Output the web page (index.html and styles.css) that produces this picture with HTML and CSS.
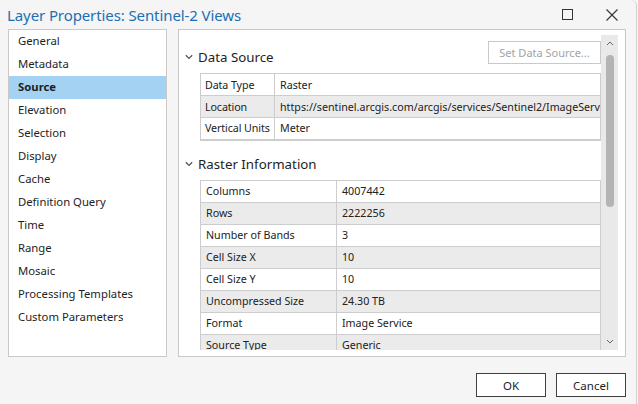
FILE: index.html
```html
<!DOCTYPE html>
<html lang="en">
<head>
<meta charset="utf-8">
<title>Layer Properties</title>
<link rel="stylesheet" href="styles.css">
</head>
<body>
<div class="window">
  <header class="titlebar">
    <h1 class="title">Layer Properties: Sentinel-2 Views</h1>
    <div class="controls">
      <svg class="ctl" width="11" height="11" viewBox="0 0 11 11"><rect x="0.5" y="0.5" width="10" height="10" fill="none" stroke="#333" stroke-width="1"/></svg>
      <svg class="ctl" width="12" height="12" viewBox="0 0 12 12"><path d="M0.5 0.5 L11.5 11.5 M11.5 0.5 L0.5 11.5" stroke="#333" stroke-width="1.1" fill="none"/></svg>
    </div>
  </header>
  <div class="main">
    <nav class="nav">
      <ul class="nav-list">
        <li class="nav-item">General</li>
        <li class="nav-item">Metadata</li>
        <li class="nav-item is-selected">Source</li>
        <li class="nav-item">Elevation</li>
        <li class="nav-item">Selection</li>
        <li class="nav-item">Display</li>
        <li class="nav-item">Cache</li>
        <li class="nav-item">Definition Query</li>
        <li class="nav-item">Time</li>
        <li class="nav-item">Range</li>
        <li class="nav-item">Mosaic</li>
        <li class="nav-item">Processing Templates</li>
        <li class="nav-item">Custom Parameters</li>
      </ul>
    </nav>
    <section class="pane">
      <div class="scroller">
        <div class="section-head">
          <svg class="chev" width="8" height="6" viewBox="0 0 8 6"><path d="M0.8 1.2 L4 4.4 L7.2 1.2" stroke="#555" stroke-width="1.3" fill="none"/></svg>
          <h2 class="section-title">Data Source</h2>
          <button class="set-src" type="button">Set Data Source...</button>
        </div>
        <table class="grid grid-ds">
          <tr><td class="k">Data Type</td><td class="v">Raster</td></tr>
          <tr class="alt"><td class="k">Location</td><td class="v">https://sentinel.arcgis.com/arcgis/services/Sentinel2/ImageServer</td></tr>
          <tr><td class="k">Vertical Units</td><td class="v">Meter</td></tr>
        </table>
        <div class="section-head section-head-2">
          <svg class="chev" width="8" height="6" viewBox="0 0 8 6"><path d="M0.8 1.2 L4 4.4 L7.2 1.2" stroke="#555" stroke-width="1.3" fill="none"/></svg>
          <h2 class="section-title">Raster Information</h2>
        </div>
        <table class="grid grid-ri">
          <tr><td class="k">Columns</td><td class="v">4007442</td></tr>
          <tr class="alt"><td class="k">Rows</td><td class="v">2222256</td></tr>
          <tr><td class="k">Number of Bands</td><td class="v">3</td></tr>
          <tr class="alt"><td class="k">Cell Size X</td><td class="v">10</td></tr>
          <tr><td class="k">Cell Size Y</td><td class="v">10</td></tr>
          <tr class="alt"><td class="k">Uncompressed Size</td><td class="v">24.30 TB</td></tr>
          <tr><td class="k">Format</td><td class="v">Image Service</td></tr>
          <tr class="alt"><td class="k">Source Type</td><td class="v">Generic</td></tr>
          <tr><td class="k">Pixel Type</td><td class="v">unsigned integer</td></tr>
        </table>
      </div>
      <div class="vscroll">
        <svg class="arrow" width="8" height="5" viewBox="0 0 8 5"><path d="M1 4 L4 1 L7 4" stroke="#666" stroke-width="1" fill="none"/></svg>
        <div class="track"><div class="thumb"></div></div>
        <svg class="arrow" width="8" height="5" viewBox="0 0 8 5"><path d="M1 1 L4 4 L7 1" stroke="#666" stroke-width="1" fill="none"/></svg>
      </div>
    </section>
  </div>
  <footer class="footer">
    <button class="btn" type="button">OK</button>
    <button class="btn" type="button">Cancel</button>
  </footer>
</div>
</body>
</html>
```

FILE: styles.css
```css
* { box-sizing: border-box; }
html, body { margin: 0; padding: 0; }
body {
  width: 638px;
  height: 404px;
  overflow: hidden;
  background: #f4f5f4;
  font-family: "Noto Sans", "Open Sans", sans-serif;
  color: #1e1e1e;
}
.window {
  width: 637px;
  height: 404px;
  border-right: 1px solid #d0d0d0;
  border-top-right-radius: 6px;
  display: flex;
  flex-direction: column;
}
.titlebar {
  height: 29px;
  display: flex;
  align-items: center;
  padding: 0 18px 0 7px;
  flex: none;
}
.title {
  margin: 0;
  font-size: 15px;
  font-weight: 400;
  color: #1b6fb5;
  letter-spacing: -0.1px;
}
.controls {
  margin-left: auto;
  display: flex;
  align-items: center;
  gap: 33px;
}
.main {
  display: flex;
  gap: 11px;
  padding: 0 10px 0 8px;
  height: 328px;
  flex: none;
}
.nav {
  width: 159px;
  background: #fff;
  border: 1px solid #c9c9c9;
  flex: none;
}
.nav-list {
  list-style: none;
  margin: 0;
  padding: 0;
}
.nav-item {
  height: 23px;
  line-height: 21px;
  padding-left: 9px;
  font-size: 11.3px;
  white-space: nowrap;
}
.nav-item.is-selected {
  background: #a3d2f2;
  font-weight: 700;
}
.pane {
  flex: 1;
  background: #fff;
  border: 1px solid #c9c9c9;
  display: flex;
}
.scroller {
  flex: 1;
  overflow: hidden;
  margin-bottom: 6px;
  padding-top: 11px;
  padding-left: 6px;
}
.section-head {
  height: 32px;
  display: flex;
  align-items: center;
}
.section-head-2 {
  margin-top: 7px;
}
.chev {
  flex: none;
  margin-right: 5px;
}
.section-title {
  margin: 0;
  font-size: 13.3px;
  font-weight: 400;
  color: #1e1e1e;
}
.set-src {
  margin-left: auto;
  align-self: flex-start;
  width: 113px;
  height: 23px;
  background: #fff;
  border: 1px solid #c9c9c9;
  color: #a3a3a3;
  font-family: inherit;
  font-size: 11px;
  padding: 0;
}
.grid {
  margin-left: 15px;
  width: 401px;
  border-collapse: collapse;
  table-layout: fixed;
  font-size: 10.7px;
  color: #222;
  border-bottom: 2px solid #cdcdcd;
}
.grid td {
  height: 22px;
  border: 1px solid #cdcdcd;
  padding: 0 0 0 5px;
  white-space: nowrap;
  overflow: hidden;
}
.grid tr.alt td { background: #ebebeb; }
.grid-ds td.k { width: 74px; padding-left: 4px; letter-spacing: -0.1px; }
.grid-ri td.k { width: 136px; }
.vscroll {
  width: 17px;
  margin: 5px 7px 6px 0;
  background: #e9e9e9;
  display: flex;
  flex-direction: column;
  align-items: center;
  flex: none;
}
.arrow {
  flex: none;
  margin: 6px 0 4px;
}
.track {
  flex: 1;
  width: 100%;
  display: flex;
  justify-content: center;
}
.thumb {
  width: 8px;
  height: 152px;
  margin-top: 5px;
  background: #b4b4b4;
  border-radius: 4px;
}
.vscroll .arrow:last-child { margin: 4px 0 6px; }
.footer {
  display: flex;
  justify-content: flex-end;
  gap: 10px;
  padding: 16px 10px 0 0;
}
.btn {
  width: 70px;
  height: 24px;
  background: #fff;
  border: 1px solid #3f3f3f;
  font-family: inherit;
  font-size: 11.5px;
  color: #1e1e1e;
  padding: 0;
}
```
